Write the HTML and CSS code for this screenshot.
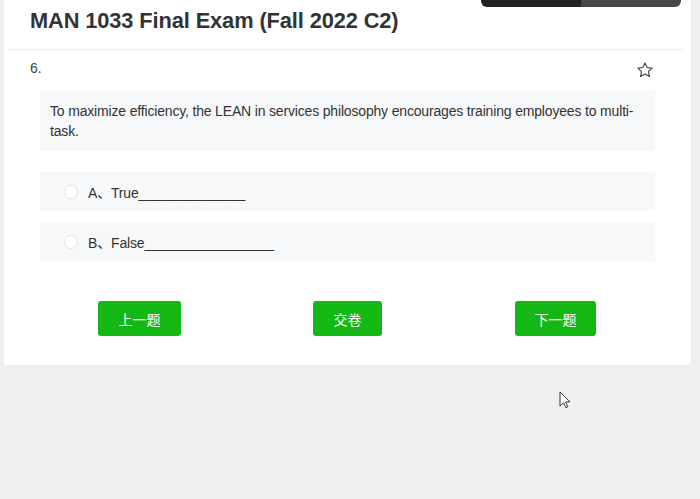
FILE: index.html
```html
<!DOCTYPE html>
<html>
<head>
<meta charset="utf-8">
<link rel="stylesheet" href="styles.css">
</head>
<body>
<div class="topbar"><span class="seg-dark"></span><span class="seg-light"></span></div>
<div class="card">
  <h1 class="title">MAN 1033 Final Exam (Fall 2022 C2)</h1>
  <div class="divider"></div>
  <div class="qhead">
    <span class="qnum">6.</span>
    <svg class="star" width="18" height="18" viewBox="0 0 24 24"><path d="M12 2.6l2.9 6.1 6.6.8-4.9 4.6 1.3 6.6L12 17.4l-5.9 3.3 1.3-6.6-4.9-4.6 6.6-.8z" fill="none" stroke="#444" stroke-width="1.5" stroke-linejoin="round"/></svg>
  </div>
  <div class="question">To maximize efficiency, the LEAN in services philosophy encourages training employees to multi-task.</div>
  <div class="options">
    <div class="option"><span class="radio"></span><span class="otext">A、True______________</span></div>
    <div class="option"><span class="radio"></span><span class="otext">B、False_________________</span></div>
  </div>
  <div class="buttons">
    <div class="cell"><button class="btn btn-prev">上一题</button></div>
    <div class="cell"><button class="btn btn-submit">交卷</button></div>
    <div class="cell"><button class="btn btn-next">下一题</button></div>
  </div>
</div>
<svg class="cursor" width="12" height="18" viewBox="0 0 12 18"><path d="M1 1v14l3.5-3.3 2.3 5 2-0.9-2.2-4.9H11z" fill="#fff" stroke="#333" stroke-width="1"/></svg>
</body>
</html>
```
FILE: styles.css
```css
html, body {
  margin: 0;
  padding: 0;
}
body {
  background: #eeeff1;
  font-family: "Liberation Sans", Arial, "Noto Sans CJK SC", sans-serif;
  color: #333;
  width: 700px;
  height: 499px;
  overflow: hidden;
  position: relative;
}
.topbar {
  position: absolute;
  left: 481px;
  top: 0;
  width: 200px;
  height: 7px;
  display: flex;
  border-radius: 0 0 6px 6px;
  overflow: hidden;
  z-index: 2;
}
.seg-dark {
  width: 100px;
  background: #222;
}
.seg-light {
  flex: 1;
  background: #474747;
}
.card {
  margin-left: 4px;
  width: 687px;
  height: 365px;
  background: #fff;
  box-sizing: border-box;
  padding-top: 9px;
  border-radius: 0 0 3px 3px;
}
.title {
  margin: 0 0 0 26px;
  font-size: 21.8px;
  line-height: 24px;
  font-weight: bold;
  color: #333;
  letter-spacing: -0.1px;
}
.divider {
  margin: 16px 8px 0 4px;
  height: 1px;
  background: #ececec;
}
.qhead {
  display: flex;
  justify-content: space-between;
  align-items: center;
  margin: 8px 37px 0 26px;
  height: 20px;
}
.qnum {
  font-size: 14px;
  color: #444;
}
.star {
  margin-top: 4px;
}
.question {
  margin: 13px 36px 0 36px;
  background: #f7f8fa;
  padding: 10px 10px 10px 10px;
  font-size: 14px;
  line-height: 20px;
  color: #333;
  letter-spacing: -0.17px;
}
.options {
  margin: 21px 36px 0 36px;
  display: flex;
  flex-direction: column;
  gap: 11px;
}
.option {
  background: #f7f8fa;
  height: 39px;
  display: flex;
  align-items: center;
  padding-left: 24px;
}
.radio {
  width: 12px;
  height: 12px;
  border: 1px solid #e4e4e4;
  border-radius: 50%;
  background: #fff;
  margin-right: 10px;
}
.otext {
  font-size: 14px;
  color: #333;
  letter-spacing: -0.17px;
}
.buttons {
  display: grid;
  grid-template-columns: 208px 208px 208px;
  justify-content: center;
  margin-top: 40px;
}
.cell {
  display: flex;
  justify-content: center;
}
.btn {
  border: none;
  background: #14b814;
  color: #fff;
  font-family: "Noto Sans CJK SC", sans-serif;
  font-size: 14px;
  height: 35px;
  border-radius: 3px;
  padding: 0;
}
.btn-prev { width: 83px; }
.btn-submit { width: 69px; }
.btn-next { width: 81px; }
.cursor {
  position: absolute;
  left: 559px;
  top: 391px;
}
```
